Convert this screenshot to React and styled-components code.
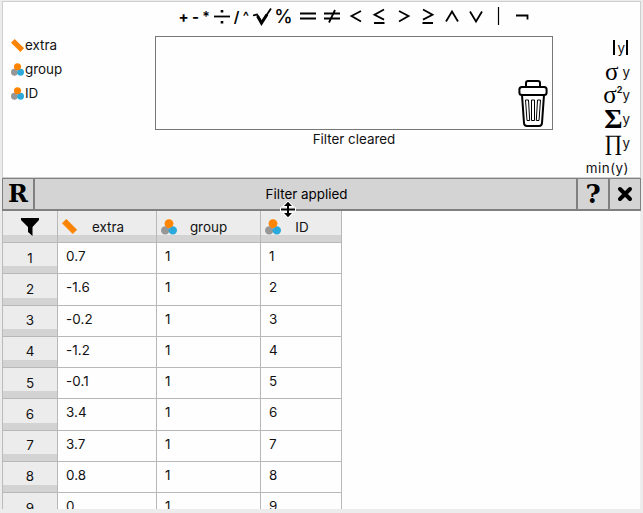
import React from "react";
import styled, { createGlobalStyle } from "styled-components";

const GlobalStyle = createGlobalStyle`
  * { box-sizing: border-box; }
  body {
    margin: 0;
    background: #ececec;
    font-family: Inter, "Liberation Sans", sans-serif;
    font-size: 13.4px;
    color: #111;
    overflow: hidden;
  }
`;

const Window = styled.main`
  height: 513px;
  width: 643px;
  padding: 1px 2px 4px;
  display: flex;
  flex-direction: column;
  overflow: hidden;
`;

const FilterPanel = styled.section`
  height: 177px;
  flex: none;
  background: #fefefe;
  border: 1px solid #cfcfcf;
  display: flex;
  flex-direction: column;
`;

const Operators = styled.div`
  height: 34px;
  padding: 0 0 6px 174px;
  display: grid;
  grid-template-columns: 13px 11px 10px 21px 9px 10px 21px 23px 25px 24px 23px 24px 25px 24px 24px 23px 23px 23px;
`;

const Operator = styled.span`
  display: flex;
  align-items: center;
  justify-content: center;
  font-size: ${(p) => p.$size || 14}px;
  font-weight: ${(p) => p.$weight || 600};
  line-height: 1;
  padding-top: ${(p) => p.$drop || 0}px;
  color: #000;
  svg { flex: none; }
`;

const Workspace = styled.div`
  display: flex;
  flex: 1;
  min-height: 0;
`;

const Variables = styled.ul`
  list-style: none;
  margin: 0;
  padding: 0 0 0 8px;
  width: 152px;
`;

const Variable = styled.li`
  display: flex;
  align-items: center;
  height: 24px;
  margin-top: ${(p) => (p.$first ? "-3px" : "0")};
  gap: 1px;
`;

const Center = styled.div`
  width: 398px;
`;

const DropArea = styled.div`
  height: 94px;
  border: 1px solid #777;
  display: flex;
  justify-content: flex-end;
  align-items: flex-end;
  padding: 0 4px 2px 0;
`;

const Hint = styled.div`
  text-align: center;
  line-height: 18px;
`;

const Functions = styled.div`
  flex: 1;
  padding-right: 10px;
`;

const FunctionRow = styled.div`
  height: 24px;
  display: flex;
  justify-content: flex-end;
  align-items: center;
  white-space: nowrap;
  font-size: 13.4px;
  letter-spacing: ${(p) => p.$spacing || 0}px;
  padding-bottom: ${(p) => p.$lift || 0}px;
  padding-right: ${(p) => p.$inset || 0}px;
`;

const Symbol = styled.span`
  font-family: "Liberation Serif", serif;
  font-size: ${(p) => p.$size || 25}px;
  font-weight: ${(p) => (p.$bold ? 700 : 400)};
  line-height: 24px;
  color: #000;
  margin-right: ${(p) => p.$gap || 0}px;
`;

const Power = styled.sup`
  font-size: 9px;
  font-weight: 700;
  line-height: 10px;
  align-self: flex-start;
  margin-top: 1px;
`;

const Bar = styled.span`
  width: 2px;
  height: 15px;
  background: #000;
  margin: 0 ${(p) => p.$right || 0}px 0 ${(p) => p.$left || 0}px;
`;

const StatusBar = styled.div`
  height: 33px;
  flex: none;
  display: grid;
  grid-template-columns: 30px 1fr 30px 30px;
  gap: 2px;
  padding: 1px 1px 2px;
  background: #808080;
`;

const BarCell = styled.div`
  background: #d4d4d4;
  display: flex;
  align-items: center;
  justify-content: center;
  font-family: ${(p) => (p.$serif ? '"DejaVu Serif", serif' : "inherit")};
  font-weight: ${(p) => (p.$serif ? 700 : 400)};
  font-size: ${(p) => p.$size || 13.4}px;
  line-height: 1;
  padding: ${(p) => (p.$message ? "1px 0 0 2px" : "0")};
  color: #000;
`;

const DataArea = styled.section`
  flex: 1;
  min-height: 0;
  overflow: hidden;
  background: #fefefe;
  border-right: 1px solid #efefef;
`;

const Table = styled.div`
  width: 340px;
  border-left: 1px solid #bbb;
`;

const Row = styled.div`
  display: grid;
  grid-template-columns: 55px 99px 104px 81px;
  height: ${(p) => (p.$header ? 32 : 31.25)}px;
`;

const HeadCell = styled.div`
  background: #ececec;
  border-right: 1px solid #b8b8b8;
  border-bottom: 1px solid #b8b8b8;
  box-shadow: inset 0 -7px #d3d3d3;
  display: flex;
  align-items: center;
  padding-left: ${(p) => (p.$corner || p.$number ? 0 : 4)}px;
  justify-content: ${(p) => (p.$corner || p.$number ? "center" : "flex-start")};
  padding-bottom: ${(p) => (p.$number ? 1 : 0)}px;
`;

const HeadLabel = styled.span`
  flex: 1;
  text-align: center;
  padding-right: ${(p) => p.$inset || 0}px;
`;

const Cell = styled.div`
  border-right: 1px solid #b8b8b8;
  border-bottom: 1px solid #b8b8b8;
  padding: 5px 0 0 8px;
  line-height: 17px;
  letter-spacing: 0.1px;
`;

const PointerOverlay = styled.svg`
  position: absolute;
  left: 280px;
  top: 201px;
`;

const Ruler = ({ size = 13 }) => (
  <svg width={size} height={size} viewBox="0 0 16 16">
    <path d="M0 4.5 4.5 0 16 11.5 11.5 16Z" fill="#ff8500" />
    <path d="m6 1.5-2 2m4.3.3-2 2m4.3.3-2 2m4.3.3-2 2m4.3.3-2 2" stroke="#c9752a" strokeWidth=".8" />
  </svg>
);

const Nominal = ({ size = 13 }) => (
  <svg width={size} height={size} viewBox="0 0 16 16">
    <circle cx="4.2" cy="11.4" r="4.2" fill="#979797" />
    <circle cx="11.8" cy="11.4" r="4.2" fill="#29a9dc" />
    <circle cx="8" cy="4.6" r="4.4" fill="#ff8500" />
  </svg>
);

const shapes = {
  divide: "M1 9.5H17",
  root: "M0 8.5 4 7.5 8.5 15.5 18 1.5",
  equal: "M1 6.5H17M1 11.5H17",
  unequal: "M1 6.5H17M1 11.5H17M12 3 6 15.5",
  less: "M14 4 4.5 9 14 14.5",
  lessEqual: "M14 2.5 4.5 7.8 14 12.6M4 16H14.5",
  greater: "M4 4 13.5 9 4 14.5",
  greaterEqual: "M4 2.5 13.5 7.8 4 12.6M3.5 16H14",
  and: "M3 14.5 9 4.5 15 14.5",
  or: "M3 4.5 9 14.5 15 4.5",
  bar: "M8.5 0V18",
  not: "M3 8.5H14.5V12.5",
};

const MathSymbol = ({ name }) => (
  <svg width="18" height="18" viewBox="0 0 18 18" overflow="visible" fill="none" stroke="#000"
    strokeWidth={name === "bar" ? 1.2 : 1.8}>
    <path d={shapes[name]} />
    {name === "divide" && <path d="M9 3v2.6M9 14v2.6" strokeWidth="2.6" />}
    {name === "root" && <path d="m4.5 9 4 7L14 7.5" strokeWidth="3" />}
  </svg>
);

const Trash = () => (
  <svg width="30" height="48" viewBox="0 0 30 48" fill="none" stroke="#000" strokeWidth="2">
    <path d="M8 7V4Q8 2 10 2H20Q22 2 22 4V7" />
    <rect x="1.4" y="8" width="27.2" height="8" rx="2.5" />
    <path d="M4 16 6 44Q6.2 47 9 47H21Q23.8 47 24 44L26 16" />
    <path d="M7.5 21h3l1.2 20.5H9ZM13.5 21h3v20.5h-3ZM19.5 21h3L21 41.5h-2.7Z" strokeWidth="1" />
  </svg>
);

const values = ["0.7", "-1.6", "-0.2", "-1.2", "-0.1", "3.4", "3.7", "0.8", "0"];

export default function App() {
  return (
    <>
      <GlobalStyle />
      <Window>
        <FilterPanel>
          <Operators>
            <Operator $size={15} $weight={700}>+</Operator>
            <Operator $size={15} $weight={700}>-</Operator>
            <Operator $size={14} $drop={1}>*</Operator>
            <Operator><MathSymbol name="divide" /></Operator>
            <Operator $size={15}>/</Operator>
            <Operator $size={13}>^</Operator>
            <Operator><MathSymbol name="root" /></Operator>
            <Operator $size={18.5} $weight={500}>%</Operator>
            {["equal", "unequal", "less", "lessEqual", "greater", "greaterEqual", "and", "or", "bar", "not"].map((name) => (
              <Operator key={name}><MathSymbol name={name} /></Operator>
            ))}
          </Operators>
          <Workspace>
            <Variables>
              <Variable $first><Ruler />extra</Variable>
              <Variable><Nominal />group</Variable>
              <Variable><Nominal />ID</Variable>
            </Variables>
            <Center>
              <DropArea><Trash /></DropArea>
              <Hint>Filter cleared</Hint>
            </Center>
            <Functions>
              <FunctionRow $lift={1}><Bar $right={2} />y<Bar $left={1} $right={2} /></FunctionRow>
              <FunctionRow $lift={1}><Symbol $gap={4}>σ</Symbol>y</FunctionRow>
              <FunctionRow $lift={2}><Symbol>σ</Symbol><Power>2</Power>y</FunctionRow>
              <FunctionRow $lift={2}><Symbol $size={28} $bold>Σ</Symbol>y</FunctionRow>
              <FunctionRow $lift={3}><Symbol $size={22}>∏</Symbol>y</FunctionRow>
              <FunctionRow $spacing={0.5} $inset={1} $lift={1}>min(y)</FunctionRow>
            </Functions>
          </Workspace>
        </FilterPanel>
        <StatusBar>
          <BarCell $serif $size={24}>R</BarCell>
          <BarCell $message>Filter applied</BarCell>
          <BarCell $serif $size={26}>?</BarCell>
          <BarCell>
            <svg width="16" height="16" viewBox="0 0 16 16" stroke="#000" strokeWidth="4" strokeLinecap="round">
              <path d="m3 3 10 10M13 3 3 13" />
            </svg>
          </BarCell>
        </StatusBar>
        <DataArea>
          <Table>
            <Row $header>
              <HeadCell $corner>
                <svg width="18" height="18" viewBox="0 0 18 18">
                  <path d="M0 0H18V2L11.5 9V18L7 14V9L0 2Z" fill="#000" />
                </svg>
              </HeadCell>
              <HeadCell><Ruler size={15} /><HeadLabel $inset={17}>extra</HeadLabel></HeadCell>
              <HeadCell><Nominal size={16} /><HeadLabel $inset={20}>group</HeadLabel></HeadCell>
              <HeadCell><Nominal size={16} /><HeadLabel $inset={18}>ID</HeadLabel></HeadCell>
            </Row>
            {values.map((value, index) => (
              <Row key={index}>
                <HeadCell $number>{index + 1}</HeadCell>
                <Cell>{value}</Cell>
                <Cell>1</Cell>
                <Cell>{index + 1}</Cell>
              </Row>
            ))}
          </Table>
        </DataArea>
      </Window>
      <PointerOverlay width="16" height="17" viewBox="0 0 16 17">
        <path d="M8 .7 12 5H9V7.5H15V9.5H9V12H12L8 16.3 4 12H7V9.5H1V7.5H7V5H4Z" fill="#000" stroke="#fff" strokeWidth="2" paintOrder="stroke" />
      </PointerOverlay>
    </>
  );
}
